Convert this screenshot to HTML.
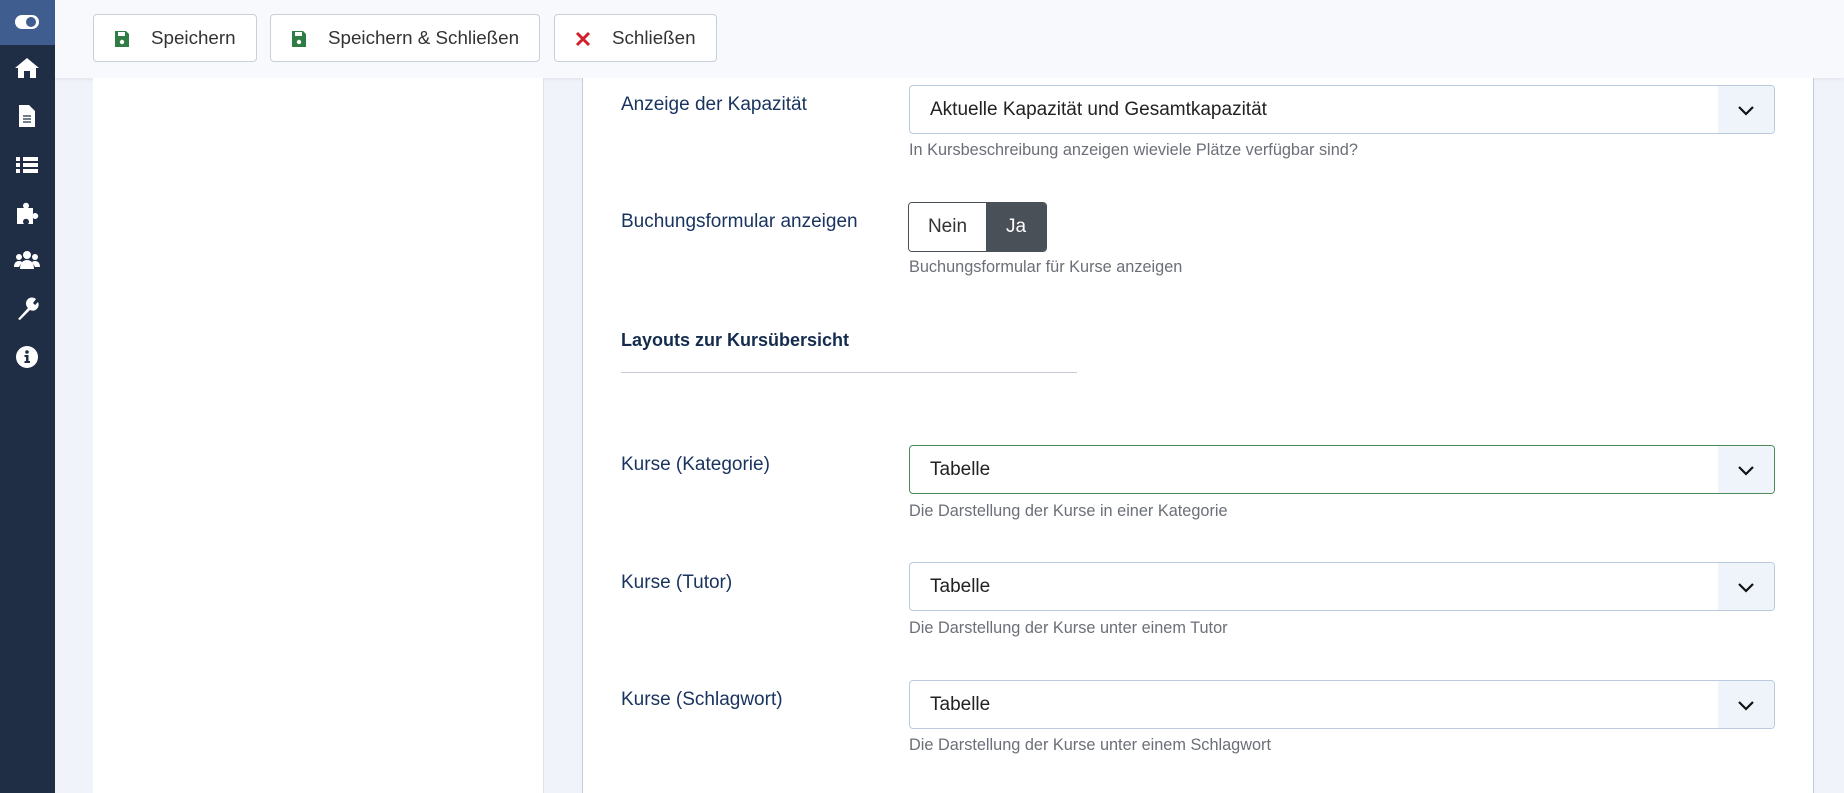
<!DOCTYPE html>
<html><head><meta charset="utf-8"><style>
*{box-sizing:border-box;margin:0;padding:0}
body{width:1844px;height:793px;overflow:hidden;background:#f0f4fa;font-family:"Liberation Sans",sans-serif;position:relative}
.sb{position:absolute;left:0;top:0;width:55px;height:793px;background:#1f2d45}
.sb .top{position:absolute;left:0;top:0;width:55px;height:45px;background:#3f5d8f}
.ic{position:absolute;left:14px;width:26px;height:26px}
.tb{position:absolute;left:55px;top:0;right:0;height:78px;background:#f7f9fc;box-shadow:0 2px 4px rgba(0,0,0,.05)}
.btn{position:absolute;top:14px;height:48px;border:1px solid #c8cfd9;border-radius:4px;background:#fff;font-size:18.8px;color:#333;line-height:46px}
.btn svg{position:absolute;left:20px;top:15px}
.btn span{position:absolute;left:57px}
.lp{position:absolute;left:93px;top:78px;width:451px;height:715px;background:#fff;border-right:1px solid #dde3ec}
.rp{position:absolute;left:582px;top:78px;width:1232px;height:715px;background:#fff;border-left:1px solid #c0cbdd;border-right:1px solid #c0cbdd}
.lbl{position:absolute;left:621px;font-size:19px;color:#1a3460}
.sel{position:absolute;left:909px;width:866px;height:49px;border:1px solid #bccadf;border-radius:4px;background:#fff;font-size:19px;color:#222;line-height:47px;padding-left:20px;overflow:hidden}
.sel .ch{position:absolute;right:0;top:0;width:56px;height:100%;background:#eff4fa}
.sel .ch svg{position:absolute;left:19px;top:18px}
.hlp{position:absolute;left:909px;font-size:16.3px;color:#6b6f77}
</style></head><body>
<div class="sb"><div class="top"></div>
<svg class="ic" style="top:9px" viewBox="0 0 26 26"><rect x="1" y="6" width="24" height="14" rx="7" fill="#fff"/><circle cx="17" cy="13" r="5" fill="#3f5d8f"/></svg>
<svg class="ic" style="top:55px" viewBox="0 0 26 26"><path d="M13 3 L1 13 L4 13 L4 23 L10 23 L10 16 L16 16 L16 23 L22 23 L22 13 L25 13 Z" fill="#fff"/></svg>
<svg class="ic" style="top:103px" viewBox="0 0 26 26"><path d="M5 2 H15 L21 8 V24 H5 Z" fill="#fff"/><path d="M9 13h8M9 16h8M9 19h8" stroke="#1f2d45" stroke-width="1.2"/></svg>
<svg class="ic" style="top:152px" viewBox="0 0 26 26"><path d="M2 5h4v4H2zM2 11h4v4H2zM2 17h4v4H2zM9 5h15v4H9zM9 11h15v4H9zM9 17h15v4H9z" fill="#fff"/></svg>
<svg class="ic" style="top:200px" viewBox="0 0 26 26"><path d="M3 8h7a3 3 0 1 1 4 0h5v6a3 3 0 1 1 0 4v6h-5a3 3 0 1 0-4 0H3z" fill="#fff"/></svg>
<svg class="ic" style="top:247px" viewBox="0 0 26 26"><circle cx="13" cy="8" r="4" fill="#fff"/><circle cx="5" cy="10" r="3" fill="#fff"/><circle cx="21" cy="10" r="3" fill="#fff"/><path d="M6 22c0-6 3-9 7-9s7 3 7 9z M0 20c0-4 2-6 5-6 2 0 3 1 3 1l-3 5z M26 20c0-4-2-6-5-6-2 0-3 1-3 1l3 5z" fill="#fff"/></svg>
<svg class="ic" style="top:295px" viewBox="0 0 26 26"><path d="M4 24 L14 13 A6 6 0 0 1 22 4 L19 8 L21 10 L24 7 A6 6 0 0 1 16 15 L6 25 Z" fill="#fff"/></svg>
<svg class="ic" style="top:344px" viewBox="0 0 26 26"><circle cx="13" cy="13" r="11" fill="#fff"/><circle cx="13" cy="8" r="1.8" fill="#1f2d45"/><path d="M10.5 11h4v6h1.5v2h-5.5v-2h1.5v-4h-1.5z" fill="#1f2d45"/></svg>
</div>
<div class="tb"></div>
<div class="btn" style="left:93px;width:164px"><svg width="16" height="18" viewBox="0 0 16 18"><path d="M1 1h11l3 3v13H1z" fill="#2f7d45"/><rect x="4" y="2" width="7" height="4" fill="#fff"/><circle cx="8" cy="12" r="2.2" fill="#fff"/></svg><span>Speichern</span></div>
<div class="btn" style="left:270px;width:270px"><svg width="16" height="18" viewBox="0 0 16 18"><path d="M1 1h11l3 3v13H1z" fill="#2f7d45"/><rect x="4" y="2" width="7" height="4" fill="#fff"/><circle cx="8" cy="12" r="2.2" fill="#fff"/></svg><span>Speichern &amp; Schließen</span></div>
<div class="btn" style="left:554px;width:163px"><svg width="16" height="18" viewBox="0 0 16 18"><path d="M2 3L14 15M14 3L2 15" stroke="#d11f2a" stroke-width="3"/></svg><span>Schließen</span></div>
<div class="lp"></div>
<div class="rp"></div>

<div class="lbl" style="top:94px">Anzeige der Kapazität</div>
<div class="sel" style="top:85px">Aktuelle Kapazität und Gesamtkapazität<div class="ch"><svg width="18" height="12" viewBox="0 0 18 12"><path d="M2 3l7 7 7-7" stroke="#111" stroke-width="2.2" fill="none"/></svg></div></div>
<div class="hlp" style="top:141px">In Kursbeschreibung anzeigen wieviele Plätze verfügbar sind?</div>

<div class="lbl" style="top:211px">Buchungsformular anzeigen</div>
<div style="position:absolute;left:908px;top:202px;width:139px;height:50px;border:1px solid #495057;border-radius:4px;overflow:hidden;font-size:19px;line-height:48px">
<div style="position:absolute;left:0;top:0;width:77px;height:100%;text-align:center;color:#333;background:#fff">Nein</div>
<div style="position:absolute;left:77px;top:0;right:0;height:100%;text-align:center;color:#fff;background:#495057">Ja</div></div>
<div class="hlp" style="top:258px">Buchungsformular für Kurse anzeigen</div>

<div class="lbl" style="top:330px;font-weight:bold;color:#152c4f;font-size:18px">Layouts zur Kursübersicht</div>
<div style="position:absolute;left:621px;top:372px;width:456px;height:1px;background:#c5cad5"></div>

<div class="lbl" style="top:454px">Kurse (Kategorie)</div>
<div class="sel" style="top:445px;border-color:#4f8a5a">Tabelle<div class="ch"><svg width="18" height="12" viewBox="0 0 18 12"><path d="M2 3l7 7 7-7" stroke="#111" stroke-width="2.2" fill="none"/></svg></div></div>
<div class="hlp" style="top:502px">Die Darstellung der Kurse in einer Kategorie</div>

<div class="lbl" style="top:572px">Kurse (Tutor)</div>
<div class="sel" style="top:562px">Tabelle<div class="ch"><svg width="18" height="12" viewBox="0 0 18 12"><path d="M2 3l7 7 7-7" stroke="#111" stroke-width="2.2" fill="none"/></svg></div></div>
<div class="hlp" style="top:619px">Die Darstellung der Kurse unter einem Tutor</div>

<div class="lbl" style="top:689px">Kurse (Schlagwort)</div>
<div class="sel" style="top:680px">Tabelle<div class="ch"><svg width="18" height="12" viewBox="0 0 18 12"><path d="M2 3l7 7 7-7" stroke="#111" stroke-width="2.2" fill="none"/></svg></div></div>
<div class="hlp" style="top:736px">Die Darstellung der Kurse unter einem Schlagwort</div>
</body></html>
